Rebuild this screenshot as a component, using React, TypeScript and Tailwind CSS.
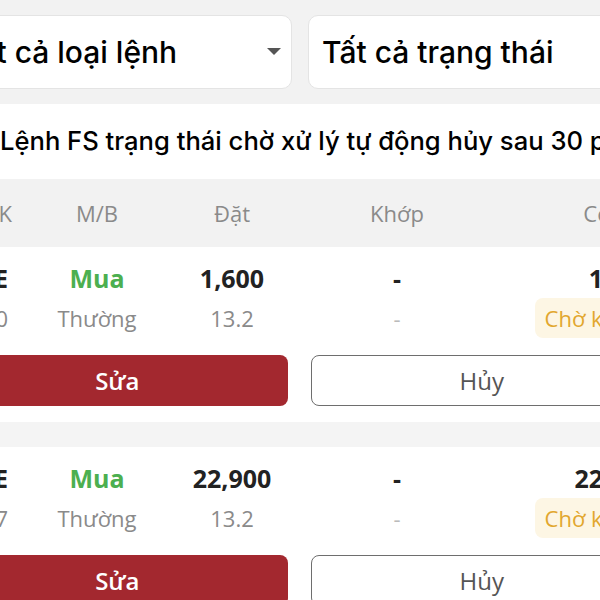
const orders = [
  { code: "VRE", time: "14:20", price: "1,600", remain: "1,600" },
  { code: "VRE", time: "14:17", price: "22,900", remain: "22,900" },
];

const cols = "grid grid-cols-[93px_114px_156px_174px_169px]";

const App = () => {
  return (
    <div className="w-[600px] h-[600px] overflow-hidden bg-white font-['Open_Sans',sans-serif]">
      <div className="w-[720px] -ml-[60px]">
        <div className="bg-[#f2f2f2] px-4 py-[15px] flex gap-4 font-['Inter',sans-serif]">
          <div className="w-[336px] shrink-0 h-[74px] bg-white rounded-[10px] border border-[#e4e4e4] flex items-center justify-between pl-[5px] pr-[10px]">
            <span className="text-[30px] font-medium text-black whitespace-nowrap">Tất cả loại lệnh</span>
            <svg width="14" height="8" viewBox="0 0 14 8">
              <path d="M0 0h14L7 7z" fill="#555" />
            </svg>
          </div>
          <div className="w-[336px] shrink-0 h-[74px] bg-white rounded-[10px] border border-[#e4e4e4] flex items-center pl-[13px]">
            <span className="text-[30px] font-medium text-black whitespace-nowrap">Tất cả trạng thái</span>
          </div>
        </div>

        <div className="h-[75px] flex items-center pl-[60px] font-['Inter',sans-serif] text-[25.6px] font-medium text-black whitespace-nowrap">
          Lệnh FS trạng thái chờ xử lý tự động hủy sau 30 phút
        </div>

        <div className={`${cols} h-[68px] items-center bg-[#f2f2f2] px-[7px] text-[22px] text-[#8a8a8a]`}>
          <span className="text-right pr-[28px] whitespace-nowrap">Mã CK</span>
          <span className="text-center">M/B</span>
          <span className="text-center">Đặt</span>
          <span className="text-center">Khớp</span>
          <span className="text-right">Còn lại</span>
        </div>

        {orders.map((o, i) => (
          <div key={i}>
            {i > 0 && <div className="h-[25px] bg-[#f4f4f4]" />}
            <div className="px-[7px] pt-[13px] pb-[16px]">
              <div className={`${cols} h-[34px] items-center text-[25px] font-bold text-[#222]`}>
                <span className="text-right pr-[32px]">{o.code}</span>
                <span className="text-center text-[#4caf50]">Mua</span>
                <span className="text-center">{o.price}</span>
                <span className="text-center">-</span>
                <span className="text-right">{o.remain}</span>
              </div>
              <div className={`${cols} h-[40px] mt-1 items-center text-[22px] text-[#8a8a8a]`}>
                <span className="text-right pr-[32px]">{o.time}</span>
                <span className="text-center">Thường</span>
                <span className="text-center">13.2</span>
                <span className="text-center text-[#bbb]">-</span>
                <span className="flex justify-end">
                  <span className="h-[40px] flex items-center px-[10px] rounded-[8px] bg-[#fdf6e4] text-[#e2a72e]">Chờ khớp</span>
                </span>
              </div>
              <div className="flex gap-[23px] mt-[17px]">
                <button className="flex-1 h-[51px] rounded-[8px] bg-[#a3282f] text-white text-[24px] font-semibold">Sửa</button>
                <button className="flex-1 h-[51px] rounded-[8px] border-[1.5px] border-[#6e6e6e] bg-white text-[#555] text-[24px]">Hủy</button>
              </div>
            </div>
          </div>
        ))}
      </div>
    </div>
  );
};

export default App;
